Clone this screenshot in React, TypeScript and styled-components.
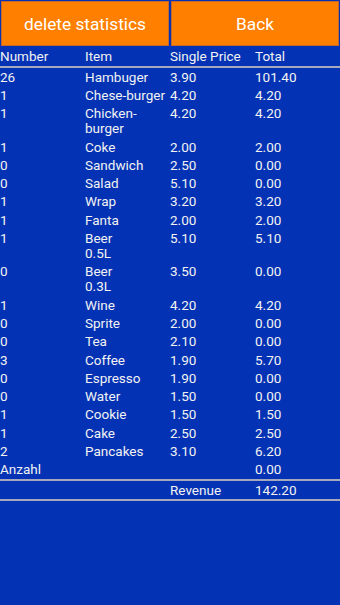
import React from "react";
import styled, { createGlobalStyle } from "styled-components";

const Global = createGlobalStyle`
  html, body {
    margin: 0;
    padding: 0;
    background: #0432b4;
  }
  body {
    font-family: Roboto, "Noto Sans", sans-serif;
    color: #f2f2f2;
  }
`;

const Page = styled.div`
  width: 340px;
  height: 605px;
  background: #0432b4;
  overflow: hidden;
`;

const ButtonBar = styled.div`
  display: flex;
`;

const ActionButton = styled.button`
  flex: 1;
  margin: 1px;
  height: 45px;
  background: #ff8000;
  border: 1px solid #c4682c;
  color: #ffffff;
  font-family: Roboto, sans-serif;
  font-size: 17.3px;
  padding: 0;
  cursor: pointer;
`;

const Grid = styled.div`
  display: grid;
  grid-template-columns: 85px 85px 85px 85px;
  font-size: 13.5px;
  line-height: 15.1px;
`;

const HeaderCell = styled.div`
  height: 19px;
  display: flex;
  align-items: center;
  padding-top: 1px;
  box-sizing: border-box;
`;

const Divider = styled.div`
  grid-column: 1 / -1;
  height: 2px;
  background: #a6a9bd;
`;

const Cell = styled.div`
  padding: 1.6px 0;
`;

const MultiLine = styled.span`
  white-space: pre-line;
`;

const items: [string, string, string, string][] = [
  ["26", "Hambuger", "3.90", "101.40"],
  ["1", "Chese-burger", "4.20", "4.20"],
  ["1", "Chicken-\nburger", "4.20", "4.20"],
  ["1", "Coke", "2.00", "2.00"],
  ["0", "Sandwich", "2.50", "0.00"],
  ["0", "Salad", "5.10", "0.00"],
  ["1", "Wrap", "3.20", "3.20"],
  ["1", "Fanta", "2.00", "2.00"],
  ["1", "Beer\n0.5L", "5.10", "5.10"],
  ["0", "Beer\n0.3L", "3.50", "0.00"],
  ["1", "Wine", "4.20", "4.20"],
  ["0", "Sprite", "2.00", "0.00"],
  ["0", "Tea", "2.10", "0.00"],
  ["3", "Coffee", "1.90", "5.70"],
  ["0", "Espresso", "1.90", "0.00"],
  ["0", "Water", "1.50", "0.00"],
  ["1", "Cookie", "1.50", "1.50"],
  ["1", "Cake", "2.50", "2.50"],
  ["2", "Pancakes", "3.10", "6.20"],
  ["Anzahl", "", "", "0.00"],
];

export default function App() {
  return (
    <Page>
      <Global />
      <ButtonBar>
        <ActionButton>delete statistics</ActionButton>
        <ActionButton>Back</ActionButton>
      </ButtonBar>
      <Grid>
        <HeaderCell>Number</HeaderCell>
        <HeaderCell>Item</HeaderCell>
        <HeaderCell>Single Price</HeaderCell>
        <HeaderCell>Total</HeaderCell>
        <Divider />
        {items.map((row, i) => (
          <React.Fragment key={i}>
            {row.map((c, j) => (
              <Cell key={j}>
                <MultiLine>{c}</MultiLine>
              </Cell>
            ))}
          </React.Fragment>
        ))}
        <Divider />
        <Cell />
        <Cell />
        <Cell>Revenue</Cell>
        <Cell>142.20</Cell>
        <Divider />
      </Grid>
    </Page>
  );
}
